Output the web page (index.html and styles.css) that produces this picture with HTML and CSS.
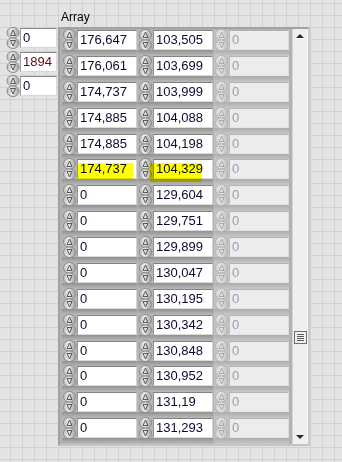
FILE: index.html
```html
<!DOCTYPE html>
<html>
<head>
<meta charset="utf-8">
<link rel="stylesheet" href="styles.css">
</head>
<body>
<svg class="defs" width="0" height="0" aria-hidden="true">
  <defs>
    <linearGradient id="sg" x1="0" y1="0" x2="1" y2="0">
      <stop offset="0" stop-color="#c0c0c0"/>
      <stop offset="0.4" stop-color="#ebebeb"/>
      <stop offset="1" stop-color="#a2a2a2"/>
    </linearGradient>
    <linearGradient id="sgd" x1="0" y1="0" x2="1" y2="0">
      <stop offset="0" stop-color="#d2d2d2"/>
      <stop offset="0.4" stop-color="#e6e6e6"/>
      <stop offset="1" stop-color="#c2c2c2"/>
    </linearGradient>
    <symbol id="spin" viewBox="0 0 14 22">
      <rect x="1" y="0.5" width="12" height="10.5" rx="6" ry="5" fill="url(#sg)" stroke="#8a8a8a"/>
      <rect x="1" y="11" width="12" height="10.5" rx="6" ry="5" fill="url(#sg)" stroke="#8a8a8a"/>
      <path d="M7 3 L4.5 8.5 H9.5 Z" fill="none" stroke="#585858" stroke-width="1"/>
      <path d="M4.5 13.5 H9.5 L7 19 Z" fill="none" stroke="#585858" stroke-width="1"/>
    </symbol>
    <symbol id="spind" viewBox="0 0 14 22">
      <rect x="1" y="0.5" width="12" height="10.5" rx="6" ry="5" fill="url(#sgd)" stroke="#b4b4b4"/>
      <rect x="1" y="11" width="12" height="10.5" rx="6" ry="5" fill="url(#sgd)" stroke="#b4b4b4"/>
      <path d="M7 3 L4.5 8.5 H9.5 Z" fill="none" stroke="#a8a8a8" stroke-width="1"/>
      <path d="M4.5 13.5 H9.5 L7 19 Z" fill="none" stroke="#a8a8a8" stroke-width="1"/>
    </symbol>
  </defs>
</svg>
<div class="panel">
  <div class="label">Array</div>
  <div class="main">
    <div class="indices">
      <div class="idx"><svg class="spin"><use href="#spin"/></svg><div class="ibox">0</div></div>
      <div class="idx"><svg class="spin"><use href="#spin"/></svg><div class="ibox red">1894</div></div>
      <div class="idx"><svg class="spin"><use href="#spin"/></svg><div class="ibox">0</div></div>
    </div>
    <div class="frame">
      <div class="rows">
        <div class="row"><div class="cell"><svg class="spin"><use href="#spin"/></svg><div class="box">176,647</div></div><div class="cell"><svg class="spin"><use href="#spin"/></svg><div class="box">103,505</div></div><div class="cell dis"><svg class="spin"><use href="#spind"/></svg><div class="box">0</div></div></div>
        <div class="row"><div class="cell"><svg class="spin"><use href="#spin"/></svg><div class="box">176,061</div></div><div class="cell"><svg class="spin"><use href="#spin"/></svg><div class="box">103,699</div></div><div class="cell dis"><svg class="spin"><use href="#spind"/></svg><div class="box">0</div></div></div>
        <div class="row"><div class="cell"><svg class="spin"><use href="#spin"/></svg><div class="box">174,737</div></div><div class="cell"><svg class="spin"><use href="#spin"/></svg><div class="box">103,999</div></div><div class="cell dis"><svg class="spin"><use href="#spind"/></svg><div class="box">0</div></div></div>
        <div class="row"><div class="cell"><svg class="spin"><use href="#spin"/></svg><div class="box">174,885</div></div><div class="cell"><svg class="spin"><use href="#spin"/></svg><div class="box">104,088</div></div><div class="cell dis"><svg class="spin"><use href="#spind"/></svg><div class="box">0</div></div></div>
        <div class="row"><div class="cell"><svg class="spin"><use href="#spin"/></svg><div class="box">174,885</div></div><div class="cell"><svg class="spin"><use href="#spin"/></svg><div class="box">104,198</div></div><div class="cell dis"><svg class="spin"><use href="#spind"/></svg><div class="box">0</div></div></div>
        <div class="row"><div class="cell"><svg class="spin"><use href="#spin"/></svg><div class="box">174,737</div></div><div class="cell"><svg class="spin"><use href="#spin"/></svg><div class="box">104,329</div></div><div class="cell dis"><svg class="spin"><use href="#spind"/></svg><div class="box">0</div></div></div>
        <div class="row"><div class="cell"><svg class="spin"><use href="#spin"/></svg><div class="box">0</div></div><div class="cell"><svg class="spin"><use href="#spin"/></svg><div class="box">129,604</div></div><div class="cell dis"><svg class="spin"><use href="#spind"/></svg><div class="box">0</div></div></div>
        <div class="row"><div class="cell"><svg class="spin"><use href="#spin"/></svg><div class="box">0</div></div><div class="cell"><svg class="spin"><use href="#spin"/></svg><div class="box">129,751</div></div><div class="cell dis"><svg class="spin"><use href="#spind"/></svg><div class="box">0</div></div></div>
        <div class="row"><div class="cell"><svg class="spin"><use href="#spin"/></svg><div class="box">0</div></div><div class="cell"><svg class="spin"><use href="#spin"/></svg><div class="box">129,899</div></div><div class="cell dis"><svg class="spin"><use href="#spind"/></svg><div class="box">0</div></div></div>
        <div class="row"><div class="cell"><svg class="spin"><use href="#spin"/></svg><div class="box">0</div></div><div class="cell"><svg class="spin"><use href="#spin"/></svg><div class="box">130,047</div></div><div class="cell dis"><svg class="spin"><use href="#spind"/></svg><div class="box">0</div></div></div>
        <div class="row"><div class="cell"><svg class="spin"><use href="#spin"/></svg><div class="box">0</div></div><div class="cell"><svg class="spin"><use href="#spin"/></svg><div class="box">130,195</div></div><div class="cell dis"><svg class="spin"><use href="#spind"/></svg><div class="box">0</div></div></div>
        <div class="row"><div class="cell"><svg class="spin"><use href="#spin"/></svg><div class="box">0</div></div><div class="cell"><svg class="spin"><use href="#spin"/></svg><div class="box">130,342</div></div><div class="cell dis"><svg class="spin"><use href="#spind"/></svg><div class="box">0</div></div></div>
        <div class="row"><div class="cell"><svg class="spin"><use href="#spin"/></svg><div class="box">0</div></div><div class="cell"><svg class="spin"><use href="#spin"/></svg><div class="box">130,848</div></div><div class="cell dis"><svg class="spin"><use href="#spind"/></svg><div class="box">0</div></div></div>
        <div class="row"><div class="cell"><svg class="spin"><use href="#spin"/></svg><div class="box">0</div></div><div class="cell"><svg class="spin"><use href="#spin"/></svg><div class="box">130,952</div></div><div class="cell dis"><svg class="spin"><use href="#spind"/></svg><div class="box">0</div></div></div>
        <div class="row"><div class="cell"><svg class="spin"><use href="#spin"/></svg><div class="box">0</div></div><div class="cell"><svg class="spin"><use href="#spin"/></svg><div class="box">131,19</div></div><div class="cell dis"><svg class="spin"><use href="#spind"/></svg><div class="box">0</div></div></div>
        <div class="row"><div class="cell"><svg class="spin"><use href="#spin"/></svg><div class="box">0</div></div><div class="cell"><svg class="spin"><use href="#spin"/></svg><div class="box">131,293</div></div><div class="cell dis"><svg class="spin"><use href="#spind"/></svg><div class="box">0</div></div></div>
      </div>
      <div class="scroll">
        <div class="arrow up"></div>
        <div class="track"><div class="thumb"><i></i><i></i><i></i><i></i></div></div>
        <div class="arrow down"></div>
      </div>
    </div>
  </div>
  <div class="hl hl1"></div>
  <div class="hl hl2"></div>
</div>
</body>
</html>
```
FILE: styles.css
```css
body { margin: 0; }
.defs { position: absolute; width: 0; height: 0; }
.panel {
  position: relative;
  width: 342px;
  height: 462px;
  box-sizing: border-box;
  overflow: hidden;
  padding-top: 10px;
  font-family: "Liberation Sans", Arial, sans-serif;
  font-size: 12px;
  background-color: #e3e3e3;
  background-image:
    linear-gradient(to right, #d1d1d1 1px, transparent 1px),
    linear-gradient(to bottom, #d1d1d1 1px, transparent 1px);
  background-size: 12px 12px;
  background-position: 10px 3px;
}
.label { margin-left: 61px; height: 14px; line-height: 14px; color: #000; }
.main { display: flex; margin-top: 3px; }
.indices {
  display: flex;
  flex-direction: column;
  gap: 4px;
  margin-left: 6px;
  margin-top: 1px;
  width: 52px;
}
.idx { display: flex; align-items: center; height: 20px; }
.spin { width: 14px; height: 22px; flex: none; }
.ibox {
  width: 37px;
  height: 20px;
  box-sizing: border-box;
  background: #fff;
  border-top: 1px solid #8a8a8a;
  border-left: 1px solid #9a9a9a;
  border-right: 1px solid #d8d8d8;
  border-bottom: 1px solid #d8d8d8;
  padding-left: 2px;
  font-size: 13px;
  line-height: 18px;
  color: #0a0a3a;
}
.ibox.red { color: #6a0a10; }
.frame {
  width: 252px;
  height: 419px;
  box-sizing: border-box;
  border: 2px solid;
  border-color: #a2a2a2 #cacaca #c4c4c4 #a2a2a2;
  background: #b2b2b2;
  display: flex;
  padding: 1px 0 0 2px;
}
.rows { display: flex; flex-direction: column; width: 227px; }
.row { display: flex; gap: 1px; height: 26px; }
.cell {
  display: flex;
  align-items: flex-start;
  width: 75px;
  background: linear-gradient(to bottom, #b4b4b4 0, #b4b4b4 20px, #909090 20px, #a6a6a6 23px, #bababa 26px);
}
.cell .spin { width: 15px; margin-top: -1px; }
.box {
  width: 60px;
  height: 20px;
  box-sizing: border-box;
  background: #fff;
  border-top: 1px solid #828282;
  border-left: 1px solid #939393;
  border-right: 1px solid #d4d4d4;
  border-bottom: 1px solid #dcdcdc;
  padding-left: 2px;
  font-size: 13px;
  line-height: 18px;
  color: #0a0a30;
  white-space: nowrap;
}
.cell.dis { background: linear-gradient(to bottom, #c4c4c4 0, #c4c4c4 20px, #acacac 20px, #bababa 23px, #c8c8c8 26px); }
.cell.dis .box {
  background: #ececec;
  border-color: #b4b4b4 #dedede #e4e4e4 #bcbcbc;
  color: #9a9ab6;
}
.scroll {
  width: 16px;
  box-sizing: border-box;
  margin: -1px 0 0 3px;
  height: 415px;
  background: #efefef;
  border-left: 1px solid #d6d6d6;
  border-right: 1px solid #f8f8f8;
  display: flex;
  flex-direction: column;
  align-items: center;
}
.arrow { width: 0; height: 0; flex: none; }
.arrow.up {
  margin-top: 5px;
  border-left: 4px solid transparent;
  border-right: 4px solid transparent;
  border-bottom: 4px solid #2a2a2a;
  box-shadow: 0 1px 0 #ffffff;
}
.arrow.down {
  margin-bottom: 5px;
  border-left: 4px solid transparent;
  border-right: 4px solid transparent;
  border-top: 4px solid #2a2a2a;
}
.track { flex: 1; width: 100%; position: relative; }
.thumb {
  position: absolute;
  left: 1px;
  top: 293px;
  width: 13px;
  height: 13px;
  box-sizing: border-box;
  border: 1px solid #6e6e6e;
  background: #f2f2f2;
  display: flex;
  flex-direction: column;
  justify-content: center;
  gap: 1px;
  padding: 0 2px;
}
.thumb i { display: block; height: 1px; background: #5a5a5a; }
.hl {
  position: absolute;
  background: #ffff00;
  mix-blend-mode: multiply;
}
.hl1 { left: 78px; top: 163px; width: 55px; height: 16px; }
.hl2 { left: 150px; top: 163px; width: 52px; height: 19px; }
```
